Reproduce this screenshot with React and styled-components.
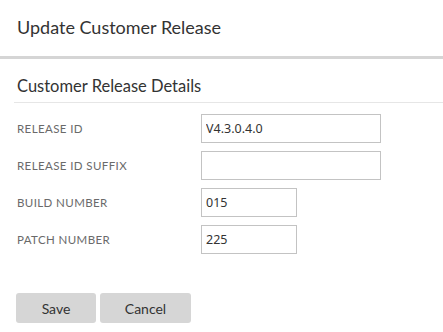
import React from "react";
import styled, { createGlobalStyle } from "styled-components";

const GlobalStyle = createGlobalStyle`
  body {
    margin: 0;
    background: #fff;
    font-family: "Lato", "Liberation Sans", sans-serif;
  }
`;

const Page = styled.div`
  width: 443px;
  height: 332px;
  background: #fff;
`;

const Header = styled.header`
  height: 59px;
  display: flex;
  align-items: center;
  padding: 0 17px 2px;
  box-sizing: border-box;
  font-size: 18px;
  color: #333;
  border-bottom: 3px solid #d5d5d5;
`;

const Section = styled.section`
  margin-left: 14px;
`;

const SectionTitle = styled.h2`
  margin: 0;
  height: 44px;
  box-sizing: border-box;
  display: flex;
  align-items: flex-end;
  padding: 0 0 6px 3px;
  font-size: 16.5px;
  font-weight: 400;
  color: #333;
  border-bottom: 1px solid #e6e6e6;
`;

const Form = styled.div`
  display: grid;
  grid-template-columns: 187px auto;
  grid-auto-rows: 29px;
  row-gap: 8px;
  padding-top: 11px;
`;

const Label = styled.label`
  display: flex;
  align-items: center;
  padding-left: 3px;
  font-size: 11.5px;
  letter-spacing: 0.4px;
  color: #6a6a6a;
`;

const Input = styled.input`
  display: block;
  width: ${(p) => p.$w}px;
  height: 29px;
  box-sizing: border-box;
  border: 1px solid #c3c3c3;
  padding: 0 4px;
  font-family: "Noto Sans", sans-serif;
  font-size: 12.5px;
  color: #333;
  outline: none;
`;

const Footer = styled.div`
  display: flex;
  gap: 4px;
  padding: 39px 0 0 16px;
`;

const Button = styled.button`
  width: ${(p) => p.$w}px;
  height: 30px;
  border: none;
  border-radius: 3px;
  background: #d6d6d6;
  font-family: "Lato", sans-serif;
  font-size: 14px;
  color: #333;
  padding: 0;
`;

const fields = [
  { label: "RELEASE ID", value: "V4.3.0.4.0", w: 180 },
  { label: "RELEASE ID SUFFIX", value: "", w: 180 },
  { label: "BUILD NUMBER", value: "015", w: 96 },
  { label: "PATCH NUMBER", value: "225", w: 96 },
];

export default function App() {
  return (
    <Page>
      <GlobalStyle />
      <Header>Update Customer Release</Header>
      <Section>
        <SectionTitle>Customer Release Details</SectionTitle>
        <Form>
          {fields.map((f) => (
            <React.Fragment key={f.label}>
              <Label>{f.label}</Label>
              <div>
                <Input $w={f.w} defaultValue={f.value} />
              </div>
            </React.Fragment>
          ))}
        </Form>
      </Section>
      <Footer>
        <Button $w={80}>Save</Button>
        <Button $w={91}>Cancel</Button>
      </Footer>
    </Page>
  );
}
